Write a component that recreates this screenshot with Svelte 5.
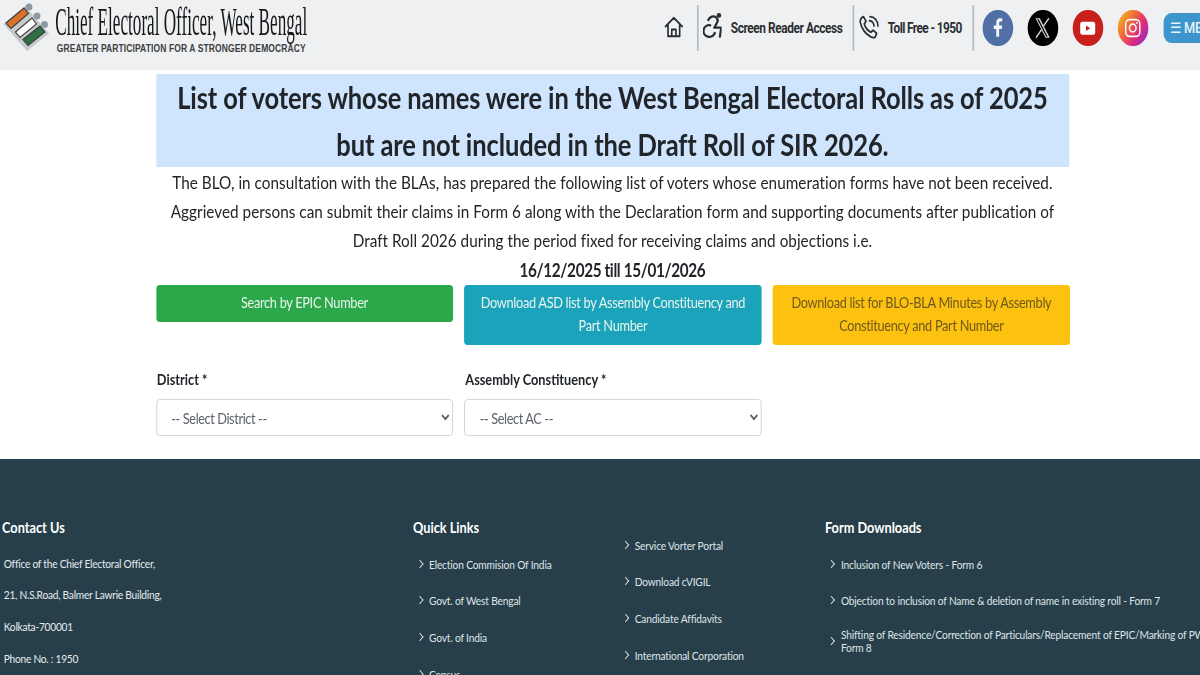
<script>
  const contact = ['Office of the Chief Electoral Officer,', '21, N.S.Road, Balmer Lawrie Building,', 'Kolkata-700001', 'Phone No. : 1950'];
  const links1 = ['Election Commision Of India', 'Govt. of West Bengal', 'Govt. of India', 'Census'];
  const links2 = ['Service Vorter Portal', 'Download cVIGIL', 'Candidate Affidavits', 'International Corporation'];
  const forms = ['Inclusion of New Voters - Form 6', 'Objection to inclusion of Name & deletion of name in existing roll - Form 7'];
</script>

<div class="page">
  <header class="top">
    <div class="brand">
      <svg class="emblem" viewBox="0 0 50 52" width="58.800" height="52" preserveAspectRatio="none" aria-hidden="true">
        <path d="M3.500 24 25 6l24 27.500L27 51Z" fill="#c6c9c9"/>
        <path d="M6 23 24 8l4.500 5.500L11 28.500Z" fill="#d9702c" stroke="#3a3a3a" stroke-width="1.100"/>
        <path d="M15.500 32 32 18l4.500 6L20 37.500Z" fill="#fff" stroke="#3a3a3a" stroke-width="1.100"/>
        <path d="M23 39.500 40 26l5 6-17 13.500Z" fill="#2f6f45" stroke="#3a3a3a" stroke-width="1.100"/>
        <circle cx="29" cy="7" r="3.500" fill="#8d9aa3"/>
        <circle cx="37" cy="16" r="3.500" fill="#8d9aa3"/>
        <circle cx="44.500" cy="24.500" r="3.500" fill="#8d9aa3"/>
      </svg>
      <div class="brand-text">
        <div class="brand-name"><span>Chief Electoral Officer, West Bengal</span></div>
        <div class="brand-tag">GREATER PARTICIPATION FOR A STRONGER DEMOCRACY</div>
      </div>
    </div>
    <nav class="tools">
      <svg class="home" viewBox="0 0 24 24" width="23.500" height="24" aria-hidden="true">
        <path d="M2 11.500 12 2.500l10 9M5 9.500V21.500h14V9.500M9.500 21.500v-7h5v7" fill="none" stroke="#2a2d30" stroke-width="2" stroke-linejoin="round" stroke-linecap="round"/>
      </svg>
      <span class="sep"></span>
      <svg class="access" viewBox="0 0 19 25" width="22.400" height="25" preserveAspectRatio="none" aria-hidden="true">
        <circle cx="16" cy="2.400" r="2.300" fill="#2a2d30"/>
        <path d="M5.300 7 C7 3.500 10.500 2.500 12.800 4.200 15 5.800 15.300 7.500 14 9.800L11.300 14.700H18.300L17 23.700" fill="none" stroke="#2a2d30" stroke-width="2.300" stroke-linecap="round" stroke-linejoin="round"/>
        <path d="M7.300 12.300A5.800 5.800 0 1 0 11.800 20" fill="none" stroke="#2a2d30" stroke-width="2.300" stroke-linecap="round"/>
      </svg>
      <span class="tool-label reader">Screen Reader Access</span>
      <span class="sep"></span>
      <svg class="phone" viewBox="0 0 24 24" width="25" height="25" aria-hidden="true">
        <path d="M5.500 2.500 8.500 7 6.500 9.500c1 3 4 6.500 7.500 8l2.500-2 4 3-1.500 3.500c-1 .8-3 .8-5 0C8.500 19.500 3.500 14 2 8c-.3-2 .8-4.500 3.500-5.500Z" fill="none" stroke="#2a2d30" stroke-width="1.800" stroke-linejoin="round"/>
        <path d="M12.500 6.500a5 5 0 0 1 5 5M13 2.500a9 9 0 0 1 9 9" fill="none" stroke="#2a2d30" stroke-width="1.800" stroke-linecap="round"/>
      </svg>
      <span class="tool-label toll">Toll Free - 1950</span>
      <span class="sep"></span>
      <div class="socials">
        <span class="soc fb">
          <svg viewBox="-3 0 36 36" width="35.300" height="36" aria-hidden="true"><path d="M16.800 27V19h3.200l.5-3.600h-3.700v-2.200c0-1.100.4-1.800 1.900-1.800h1.900V8.200c-.5-.1-1.500-.2-2.700-.2-2.700 0-4.500 1.600-4.500 4.600v2.800h-3V19h3v8Z" fill="#f4f6fa"/></svg>
        </span>
        <span class="soc xx">
          <svg viewBox="-3 0 36 36" width="35.300" height="36" aria-hidden="true"><path d="M6.500 8h5l12 20h-5ZM8.500 9.200l10.800 17.600h1.700L10.200 9.200Z" fill="#d8d8d8" fill-rule="evenodd"/><path d="M22.500 8 16 16M13.800 19.500 7 28" fill="none" stroke="#d8d8d8" stroke-width="1.600"/></svg>
        </span>
        <span class="soc yt">
          <svg viewBox="-3 0 36 36" width="35.300" height="36" aria-hidden="true"><rect x="6" y="11.500" width="18" height="13.500" rx="2.500" fill="#fff"/><path d="m13 15.500 5 2.800-5 2.800Z" fill="#c8201c"/></svg>
        </span>
        <span class="soc ig">
          <svg viewBox="-3 0 36 36" width="35.300" height="36" aria-hidden="true"><rect x="6.500" y="9.500" width="17" height="17" rx="4.500" fill="none" stroke="#fff" stroke-width="1.700"/><circle cx="15" cy="18" r="4" fill="none" stroke="#fff" stroke-width="1.700"/><circle cx="20" cy="13" r="1" fill="#fff"/></svg>
        </span>
      </div>
      <button class="menu" type="button">☰ MENU</button>
    </nav>
  </header>

  <main class="content">
    <h1>List of voters whose names were in the West Bengal Electoral Rolls as of 2025 but are not included in the Draft Roll of SIR 2026.</h1>
    <p class="lead">The BLO, in consultation with the BLAs, has prepared the following list of voters whose enumeration forms have not been received. Aggrieved persons can submit their claims in Form 6 along with the Declaration form and supporting documents after publication of Draft Roll 2026 during the period fixed for receiving claims and objections i.e.</p>
    <p class="dates">16/12/2025 till 15/01/2026</p>
    <div class="grid actions">
      <a class="btn green" href="#epic">Search by EPIC Number</a>
      <a class="btn teal" href="#asd">Download ASD list by Assembly Constituency and Part Number</a>
      <a class="btn amber" href="#minutes">Download list for BLO-BLA Minutes by Assembly Constituency and Part Number</a>
    </div>
    <div class="grid fields">
      <label>
        <span>District *</span>
        <select><option>-- Select District --</option></select>
      </label>
      <label>
        <span>Assembly Constituency *</span>
        <select><option>-- Select AC --</option></select>
      </label>
    </div>
  </main>

  <footer class="foot">
    <section class="col c-contact">
      <h2>Contact Us</h2>
      {#each contact as line}<p>{line}</p>{/each}
    </section>
    <section class="col c-quick">
      <h2>Quick Links</h2>
      <ul>{#each links1 as l}<li>{l}</li>{/each}</ul>
    </section>
    <section class="col c-more">
      <ul>{#each links2 as l}<li>{l}</li>{/each}</ul>
    </section>
    <section class="col c-forms">
      <h2>Form Downloads</h2>
      <ul>
        {#each forms as l}<li>{l}</li>{/each}
        <li class="wrap">Shifting of Residence/Correction of Particulars/Replacement of EPIC/Marking of PWD - Form 8</li>
      </ul>
    </section>
  </footer>
</div>

<style>
  :global(body) { margin: 0; background: #fff; overflow: hidden; }
  /* The reference is a horizontally squeezed capture: the whole page is laid out wider, then narrowed. */
  .page {
    width: 1411.8px; height: 675px; overflow: hidden;
    transform: scaleX(.85); transform-origin: 0 0;
    font-family: Lato, "Noto Sans", sans-serif; color: #212529;
    display: flex; flex-direction: column;
  }
  .top {
    height: 70px; flex: none; background: #eef0f2;
    display: flex; justify-content: space-between; align-items: flex-start;
    white-space: nowrap;
  }
  .brand { display: flex; gap: 6px; padding: 0; }
  .emblem { flex: none; }
  .brand-text { width: 300px; padding-top: 3px; }
  .brand-name { height: 38px; font: 400 39px/38px "Liberation Serif", serif; color: #16181a; }
  .brand-name span { display: inline-block; transform: scaleX(.517); transform-origin: 0 50%; }
  .brand-tag { margin-top: 2px; font: 700 10px/12px "Liberation Sans", sans-serif; color: #3d4042; letter-spacing: .12px; margin-left: 2px; }
  .tools { display: flex; align-items: flex-start; width: 630.800px; flex: none; padding-top: 5px; box-sizing: border-box; overflow: hidden; }
  .home { margin: 10px 15.500px 0 0; flex: none; }
  .sep { width: 1.800px; height: 46px; background: #b9bcbf; flex: none; }
  .access { margin: 8px 10.600px 0 5px; flex: none; }
  .phone { margin: 9px 9.100px 0 5.300px; flex: none; }
  .tool-label { font: 700 14px/46px Roboto, sans-serif; color: #2b2e31; letter-spacing: -.5px; flex: none; }
  .reader { width: 131.800px; margin-right: 11.700px; }
  .toll { width: 87px; margin-right: 13px; letter-spacing: -.72px; }
  .socials { display: flex; gap: 17.700px; margin: 5px 0 0 10px; flex: none; }
  .soc { width: 35.300px; height: 36px; border-radius: 50%; display: block; flex: none; }
  .soc svg { display: block; }
  .fb { background: #4f6fa5; }
  .xx { background: #000; }
  .yt { background: #c8201c; }
  .ig { background: linear-gradient(125deg, #f5b51f 8%, #ee6a3c 38%, #dd2a7b 65%, #8b2fc9 95%); }
  .menu {
    margin: 8px 0 0 18.600px; width: 70px; height: 30px; flex: none; border: 0; border-radius: 9px 0 0 9px;
    background: #3c96cd; color: #e8f3fa; font: 500 15px/30px Roboto, sans-serif; text-align: left; padding: 0 0 0 7px; white-space: nowrap; overflow: hidden;
  }

  .content { width: 1074px; margin: 4px 0 0 183.500px; flex: none; }
  h1 {
    margin: 0; background: #cfe4fd; color: #212529; text-align: center;
    font-size: 30px; line-height: 46.500px; font-weight: 700; letter-spacing: -.13px; height: 93px; padding: 0 20px; box-sizing: border-box;
  }
  .lead {
    margin: 1px 0 0; text-align: center; font-size: 18px; line-height: 29.200px; letter-spacing: .03px;
  }
  .dates { margin: -1px 0 0; text-align: center; font-size: 18px; line-height: 30px; font-weight: 700; letter-spacing: -.42px; }
  .grid { display: grid; grid-template-columns: repeat(3, 349.400px); column-gap: 13.500px; }
  .actions { align-items: start; }
  .btn {
    display: block; border-radius: 4px; text-align: center; text-decoration: none;
    font-size: 15px; line-height: 23px; letter-spacing: -.36px; padding: 6px 14px 8px; color: #e9f4ee;
  }
  .green { background: #2ba84a; }
  .teal { background: #1aa3ba; }
  .amber { background: #fdc10f; color: #6e5a1e; }
  .fields { margin-top: 24px; }
  label { display: block; }
  label span { display: block; font-size: 15px; line-height: 21px; font-weight: 700; margin-bottom: 9px; padding-left: 1px; }
  select {
    display: block; width: 100%; height: 37px; background: #fff; border: 1px solid #ced4da; border-radius: 4px;
    font-family: inherit; font-size: 15px; letter-spacing: -.47px; color: #5c636a; padding: 1px 6px 0 13px;
  }

  .foot {
    margin-top: 23px; flex: 1 0 0; background: #273f4a; color: #eef2f4;
    display: grid; grid-template-columns: 483.500px 242px 242.600px 1fr; padding: 57px 0 0 2.400px; min-height: 0;
  }
  .col { min-width: 0; }
  h2 { margin: 0; font-size: 15px; line-height: 22px; font-weight: 700; color: #fff; }
  .c-contact p { margin: 0 0 0 2px; font-size: 12px; line-height: 31.700px; letter-spacing: -.3px; color: #e6ebee; }
  .c-contact h2 { margin-bottom: 10px; }
  ul { list-style: none; margin: 19px 0 0; padding: 0; }
  .c-more ul { margin-top: 22px; }
  li {
    position: relative; padding-left: 16.800px; margin-left: 2px;
    font-size: 12px; line-height: 15px; letter-spacing: -.2px; margin-bottom: 21.800px; color: #dfe5e8; white-space: nowrap;
  }
  li::before {
    content: ""; position: absolute; left: 3px; top: 4px; width: 5px; height: 5px;
    border-top: 1.400px solid #dfe5e8; border-right: 1.400px solid #dfe5e8; transform: rotate(45deg);
  }
  .wrap { white-space: normal; width: 472px; line-height: 12.500px; box-sizing: border-box; margin-top: -1px; }
  .wrap::before { top: 9px; }
</style>
